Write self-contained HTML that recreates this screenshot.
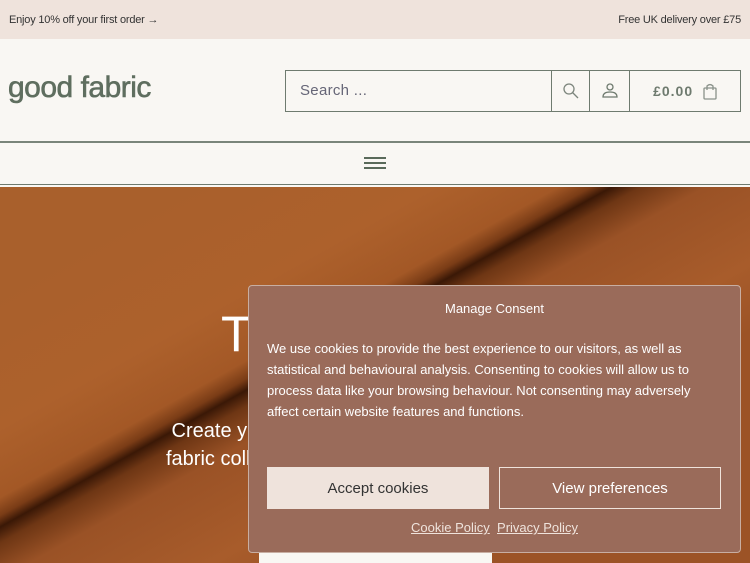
<!DOCTYPE html>
<html><head><meta charset="utf-8"><style>
*{margin:0;padding:0;box-sizing:border-box}
body{width:750px;height:563px;overflow:hidden;font-family:"Liberation Sans",sans-serif;background:#f9f7f3;position:relative}
.top{height:39px;background:#efe3dc;font-size:11px;color:#333;display:flex;justify-content:space-between;align-items:center;padding:0 9px 0 9px;letter-spacing:-.2px}
.hdr{height:104px;border-bottom:2px solid #7a857a;position:relative}
.logo{position:absolute;left:8px;top:32px;font-size:30px;color:#5f6e5f;letter-spacing:-.5px;-webkit-text-stroke:.6px #5f6e5f}
.sb{position:absolute;left:285px;top:31px;width:456px;height:42px;border:1.5px solid #6f7b6f;display:flex}
.sb div{border-left:1.5px solid #6f7b6f;display:flex;align-items:center;justify-content:center}
.nav{height:42px;position:relative;border-bottom:1px solid #6e7a6e}
.hero{position:absolute;top:187px;left:0;width:750px;height:376px;overflow:hidden}
.modal{position:absolute;left:248px;top:285px;width:493px;height:268px;background:#9a6b5a;border:1px solid #c8aea2;border-radius:4px;color:#fff}
.btn{position:absolute;top:181px;height:42px;width:222px;display:flex;align-items:center;justify-content:center;font-size:15px}
</style></head><body>
<div class="top"><span>Enjoy 10% off your first order →</span><span>Free UK delivery over £75</span></div>
<div class="hdr">
<div class="logo">good fabric</div>
<div class="sb">
<span style="flex:1;padding-left:14px;line-height:39px;font-size:15px;color:#667;letter-spacing:.3px">Search ...</span>
<div style="width:38px"><svg width="18" height="18" viewBox="0 0 18 18"><circle cx="7" cy="7" r="5" fill="none" stroke="#7c857c" stroke-width="1.3"/><path d="M10.5 10.5L16 16" stroke="#7c857c" stroke-width="1.3"/></svg></div>
<div style="width:40px"><svg width="18" height="18" viewBox="0 0 18 18"><circle cx="9" cy="5" r="3" fill="none" stroke="#6e7a6e" stroke-width="1.3"/><path d="M2 15Q2 10 9 10Q16 10 16 15Z" fill="none" stroke="#6e7a6e" stroke-width="1.3"/></svg></div>
<div style="width:111px;font-size:14px;color:#6e7a6e;letter-spacing:1px;font-weight:bold">£0.00&nbsp;&nbsp;<svg width="14" height="17" viewBox="0 0 14 17"><rect x="1" y="5" width="12" height="11" rx="1" fill="none" stroke="#8a928a" stroke-width="1.3"/><path d="M4 7V3Q7 0 10 3V7" fill="none" stroke="#8a928a" stroke-width="1.3"/></svg></div>
</div></div>
<div class="nav"><div style="position:absolute;left:364px;top:14px;width:22px;height:12px;border-top:2px solid #5a6a5a;border-bottom:2px solid #5a6a5a"><div style="margin-top:3px;border-top:2px solid #5a6a5a"></div></div></div>
<div class="hero">
<svg width="750" height="376" style="position:absolute;left:0;top:0">
<defs><linearGradient id="g" gradientUnits="userSpaceOnUse" x1="203" y1="-8" x2="397" y2="341">
<stop offset="0" stop-color="#a9602c"/>
<stop offset=".3" stop-color="#ad612c"/>
<stop offset=".45" stop-color="#a35826"/>
<stop offset=".49" stop-color="#7a3c16"/>
<stop offset=".515" stop-color="#3a1806"/>
<stop offset=".55" stop-color="#6e3614"/>
<stop offset=".63" stop-color="#9a5226"/>
<stop offset=".85" stop-color="#a85c2b"/>
<stop offset="1" stop-color="#9c5326"/>
</linearGradient></defs>
<rect width="750" height="376" fill="url(#g)"/>
</svg>
<div style="position:absolute;left:221px;top:118px;font-size:50px;color:#fff;font-weight:300">To</div>
<div style="position:absolute;left:166px;top:230px;font-size:20px;color:#fff;line-height:28px">&nbsp;Create yo<br>fabric coll</div>
<div style="position:absolute;left:259px;top:366px;width:233px;height:12px;background:#f9f7f3"></div>
</div>
<div class="modal">
<div style="text-align:center;margin-top:15px;font-size:13px">Manage Consent</div>
<div style="position:absolute;left:18px;top:52px;width:450px;font-size:13px;line-height:21px">We use cookies to provide the best experience to our visitors, as well as statistical and behavioural analysis. Consenting to cookies will allow us to process data like your browsing behaviour. Not consenting may adversely affect certain website features and functions.</div>
<div class="btn" style="left:18px;background:#efe3dc;color:#333">Accept cookies</div>
<div class="btn" style="left:250px;border:1px solid #efe3dc;color:#fff">View preferences</div>
<div style="position:absolute;top:234px;width:100%;text-align:center;font-size:13px;color:#efe3dc"><u>Cookie Policy</u>&nbsp;&nbsp;<u>Privacy Policy</u></div>
</div>
</body></html>
